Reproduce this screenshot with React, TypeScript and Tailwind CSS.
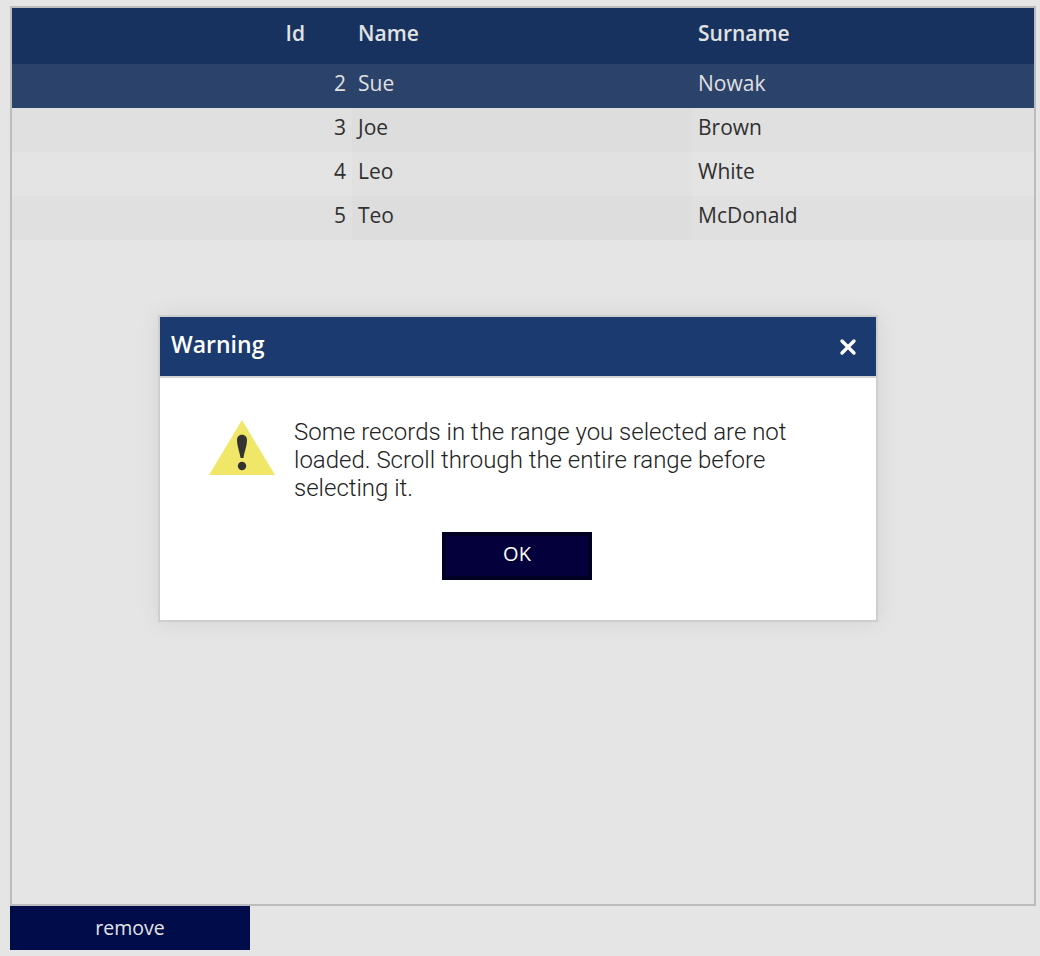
const rows = [
  { id: 2, name: "Sue", surname: "Nowak", kind: "selected" },
  { id: 3, name: "Joe", surname: "Brown", kind: "even" },
  { id: 4, name: "Leo", surname: "White", kind: "odd" },
  { id: 5, name: "Teo", surname: "McDonald", kind: "even" },
];

function Row({ row }: { row: (typeof rows)[number] }) {
  const selected = row.kind === "selected";
  const even = row.kind === "even";
  const base = selected
    ? "bg-[#2b426b] text-[#e0e0e0]"
    : even
      ? "bg-[#e0e0e0] text-[#303030]"
      : "bg-[#e4e4e4] text-[#303030]";
  const mid = selected ? "" : even ? "bg-[#dddddd]" : "bg-[#e1e1e1]";
  return (
    <div className={`grid h-11 grid-cols-[340px_340px_1fr] items-center text-[21px] ${base}`}>
      <div className="flex h-full items-center justify-end pb-1 pr-[6px]">{row.id}</div>
      <div className={`flex h-full items-center pb-1 pl-[6px] ${mid}`}>{row.name}</div>
      <div className="flex h-full items-center pb-1 pl-[6px]">{row.surname}</div>
    </div>
  );
}

export default function App() {
  return (
    <div className="relative h-[956px] w-[1040px] overflow-hidden bg-[#e5e5e5] pl-[10px] pt-[6px] font-['Open_Sans',sans-serif]">
      <div className="h-[900px] w-[1026px] border-2 border-[#bcbcbc]">
        <div className="grid h-14 grid-cols-[340px_340px_1fr] items-center bg-[#17325f] pb-1 text-[21px] font-semibold text-[#e2e2e2]">
          <div className="flex justify-end pr-[47px]">Id</div>
          <div className="pl-[6px]">Name</div>
          <div className="pl-[6px]">Surname</div>
        </div>
        {rows.map((row) => (
          <Row key={row.id} row={row} />
        ))}
      </div>
      <button className="flex h-11 w-60 items-center justify-center bg-[#000d4a] text-[19.5px] text-[#e4e4e4]">
        remove
      </button>

      <div className="absolute left-[158px] top-[315px] h-[307px] w-[720px] border-2 border-[#cecece] bg-white shadow-[0_0_22px_rgba(0,0,0,0.08)]">
        <div className="flex h-[59px] items-center justify-between bg-[#1b3a6f] pb-[5px] pl-[11px] pr-[18px] text-white">
          <span className="text-[23px] font-semibold">Warning</span>
          <svg className="mt-[5px]" width="20" height="20" viewBox="0 0 20 20" aria-hidden="true">
            <path d="M4 4 L16 16 M16 4 L4 16" stroke="#fff" strokeWidth="3.4" strokeLinecap="round" />
          </svg>
        </div>
        <div className="h-[2px] bg-[#d2d2d2]" />
        <div className="flex pl-[48px] pt-[40px]">
          <svg className="mt-[1px] shrink-0 blur-[0.6px]" width="68" height="58" viewBox="0 0 68 58" aria-hidden="true">
            <path d="M34 1 L67 56 L1 56 Z" fill="#f0e768" />
            <path d="M29 21 C29 14 39 14 39 21 C39 27 36 34 35.5 39 L32.5 39 C32 34 29 27 29 21 Z" fill="#333" />
            <circle cx="34" cy="47" r="4.2" fill="#333" />
          </svg>
          <p className="ml-[18px] w-[510px] font-['Roboto',sans-serif] text-[24px] font-light leading-[28px] text-[#222]">
            Some records in the range you selected are not loaded. Scroll through the entire range before selecting it.
          </p>
        </div>
        <div className="ml-[282px] mt-[30px] flex h-12 w-[150px] items-center justify-center border-4 border-[#000024] bg-[#03003b] pb-1 text-[20px] text-white">
          OK
        </div>
      </div>
    </div>
  );
}
